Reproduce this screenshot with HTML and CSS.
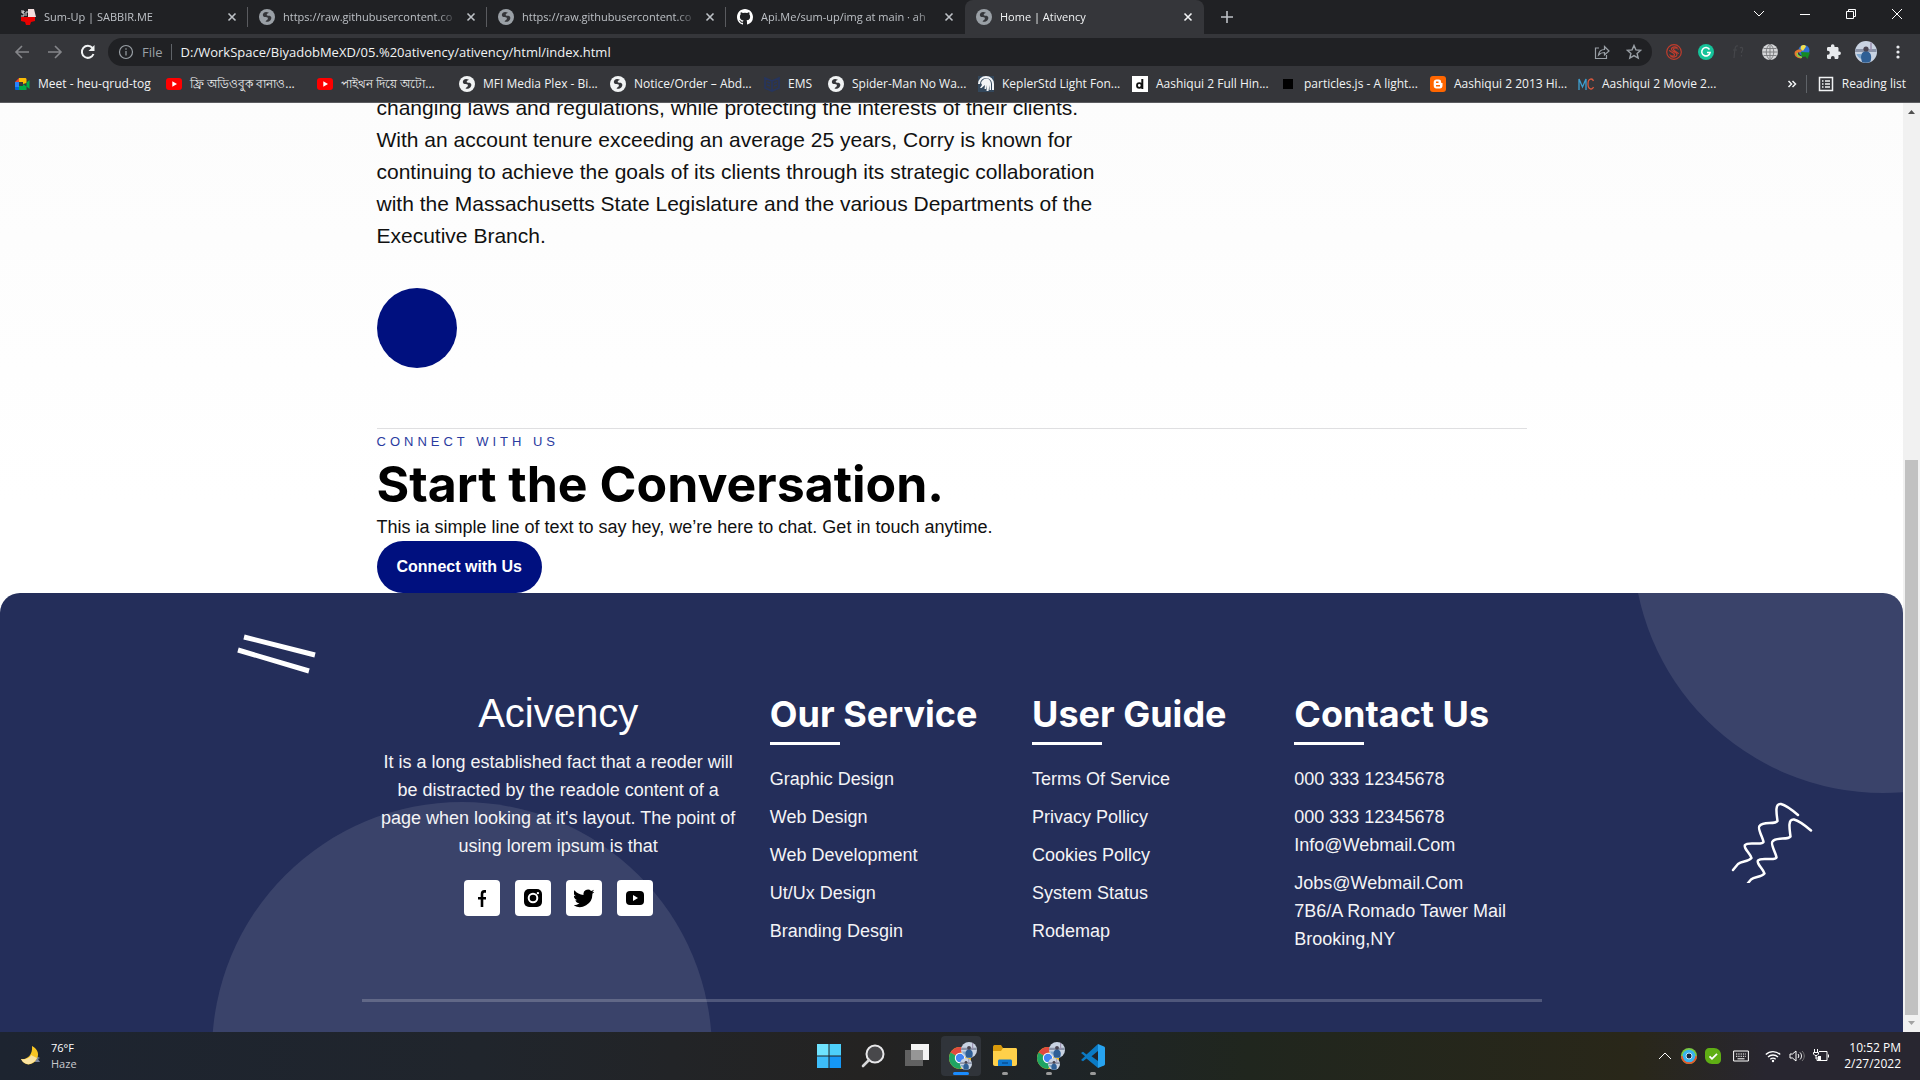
FILE: index.html
```html
<!DOCTYPE html>
<html lang="en">
<head>
<meta charset="utf-8">
<title>Home | Ativency</title>
<link rel="stylesheet" href="styles.css">
</head>
<body>
<svg class="defs" aria-hidden="true">
  <defs>
    <symbol id="globe" viewBox="0 0 16 16"><circle cx="8" cy="8" r="8" fill="currentColor"/><path class="land" d="M8 3.2C6 2.6 4 4 3.8 6c.2 1.800 1.400 2 2.800 2.100 1.800.1 2.600.7 2.200 1.900-.4 1.200-1.800 1.200-2.200 2.700 3.600.8 6-1.700 5.700-4.200-.2-1.600-1.600-1.900-2.800-1.800C7.900 6.800 7.200 5.900 8 5c.6-.6 1.600-.6 1.800-1.200C9.600 3.400 8.700 3.300 8 3.200z"/></symbol>
    <symbol id="close" viewBox="0 0 10 10"><path d="M1.500 1.500l7 7M8.500 1.500l-7 7" stroke="currentColor" stroke-width="1.600" fill="none"/></symbol>
    <symbol id="youtube" viewBox="0 0 16 16"><rect y="2" width="16" height="12" rx="3" fill="#f00"/><path d="M6.300 5.300v5.400L11 8z" fill="#fff"/></symbol>
    <symbol id="photo" viewBox="0 0 22 22"><circle cx="11" cy="11" r="11" fill="#c9d3e2"/><path d="M.5 8h21v3H0z" fill="#8a93a8"/><path d="M1.500 13h5v5c-2.500-1-4-2.500-5-5z" fill="#7fa8cf"/><path d="M7 21c-2-6-1-10 4-11 5 1 6 5 4.500 10.500-3 1.500-6 1.500-8.500.5z" fill="#2f5f95"/><circle cx="11" cy="8" r="2.600" fill="#4a4552"/><path d="M16 1.500v8" stroke="#9a8fae" stroke-width="1.500"/></symbol>
    <symbol id="chrome" viewBox="0 0 28 28"><circle cx="11" cy="16" r="11" fill="#fbc116"/><path d="M11 16 1.500 10.500A11 11 0 0 1 20.500 10.500H11z" fill="#e04a3f"/><path d="M11 16 1.500 10.500A11 11 0 0 0 11 27l4.500-8z" fill="#1fa463"/><circle cx="11" cy="16" r="5.200" fill="#fff"/><circle cx="11" cy="16" r="4.200" fill="#4285f4"/><use href="#photo" x="12" y="0" width="16" height="16"/><use href="#photo" x="11" y="16" width="12" height="12"/></symbol>
  </defs>
</svg>

<header class="browser">
  <nav class="tabs" aria-label="Tabs">
    <div class="tab"><svg class="fav" viewBox="0 0 16 16"><path d="M8 0h6l2 8H8z" fill="#f3dede"/><path d="M1 8h14v4l-4 1-1 3H6l-1-3-4-1z" fill="#e80000"/><path d="M1 2h3v1H2v1h2v3H1M6 7V3h2" stroke="#ddd" fill="none"/></svg><span class="title">Sum-Up | SABBIR.ME</span><button class="x" aria-label="Close tab"><svg><use href="#close"/></svg></button></div>
    <div class="tab"><svg class="fav dim"><use href="#globe"/></svg><span class="title">https://raw.githubusercontent.co</span><button class="x" aria-label="Close tab"><svg><use href="#close"/></svg></button></div>
    <div class="tab"><svg class="fav dim"><use href="#globe"/></svg><span class="title">https://raw.githubusercontent.co</span><button class="x" aria-label="Close tab"><svg><use href="#close"/></svg></button></div>
    <div class="tab last"><svg class="fav" viewBox="0 0 16 16"><path fill="#fff" d="M8 0C3.580 0 0 3.580 0 8c0 3.540 2.290 6.530 5.470 7.590.4.070.55-.17.55-.38v-1.490c-2.230.48-2.690-1.070-2.690-1.070-.36-.92-.89-1.170-.89-1.170-.73-.5.050-.49.050-.49.8.060 1.230.83 1.230.83.71 1.230 1.870.87 2.330.66.070-.52.280-.87.510-1.070-1.780-.2-3.640-.89-3.640-3.950 0-.87.310-1.590.82-2.150-.08-.2-.36-1.020.080-2.120 0 0 .67-.21 2.200.82a7.400 7.400 0 0 1 4 0c1.530-1.040 2.200-.82 2.200-.82.44 1.100.16 1.920.080 2.120.51.560.82 1.270.82 2.150 0 3.070-1.870 3.750-3.650 3.950.29.250.54.730.54 1.480v2.200c0 .21.150.46.550.38A8 8 0 0 0 16 8c0-4.420-3.580-8-8-8z"/></svg><span class="title">Api.Me/sum-up/img at main · ah</span><button class="x" aria-label="Close tab"><svg><use href="#close"/></svg></button></div>
    <div class="tab active"><svg class="fav dim"><use href="#globe"/></svg><span class="title">Home | Ativency</span><button class="x" aria-label="Close tab"><svg><use href="#close"/></svg></button></div>
    <button class="newtab" aria-label="New tab"><svg viewBox="0 0 12 12"><path d="M6 0v12M0 6h12" stroke="currentColor" stroke-width="1.600"/></svg></button>
    <div class="window-buttons">
      <button aria-label="Search tabs"><svg viewBox="0 0 12 12"><path d="M1 3l5 5 5-5"/></svg></button>
      <button aria-label="Minimise"><svg viewBox="0 0 12 12"><path d="M1 6.500h10"/></svg></button>
      <button aria-label="Restore"><svg viewBox="0 0 12 12"><path d="M1.500 3.500h7v7h-7zM3.500 3.500v-2h7v7h-2"/></svg></button>
      <button aria-label="Close window"><svg viewBox="0 0 12 12"><path d="M1 1l10 10M11 1L1 11"/></svg></button>
    </div>
  </nav>

  <div class="toolbar">
    <button class="tool faded" aria-label="Back"><svg viewBox="0 0 16 16"><path d="M15 8H2M8 2L2 8l6 6"/></svg></button>
    <button class="tool faded" aria-label="Forward"><svg viewBox="0 0 16 16"><path d="M1 8h13M8 2l6 6-6 6"/></svg></button>
    <button class="tool" aria-label="Reload"><svg viewBox="0 0 16 16"><path stroke-width="2" d="M13.500 10A6 6 0 1 1 12.500 4"/><path d="M14.500 1v6H8.500z" fill="currentColor" stroke="none"/></svg></button>
    <div class="omnibox">
      <svg class="glyph info" viewBox="0 0 16 16"><circle cx="8" cy="8" r="6.500"/><path d="M8 7v4.500M8 4.300v1.500"/></svg>
      <label class="scheme" for="url">File</label>
      <input id="url" type="text" value="D:/WorkSpace/BiyadobMeXD/05.%20ativency/ativency/html/index.html">
      <button aria-label="Share"><svg class="glyph" viewBox="0 0 16 16"><path d="M5 4H1.500v10.500h11V11M4.500 11c.5-4 2.500-5.500 6-5.500V2.500L15 7l-4.500 4V8.500c-3 0-4.500.8-6 2.500z"/></svg></button>
      <button aria-label="Bookmark this page"><svg class="glyph" viewBox="0 0 16 16"><path stroke-width="1.400" d="M8 1.500l1.900 4.400 4.800.4-3.600 3.100 1.100 4.700L8 11.600l-4.200 2.500 1.100-4.700-3.600-3.100 4.800-.4z"/></svg></button>
    </div>
    <div class="extensions">
      <svg viewBox="0 0 16 16"><g fill="none" stroke="#c13c2c" stroke-width="1.200"><circle cx="8" cy="8" r="7.300"/><path d="M11.500 4C9 2 5 3 5.500 5.500S11 8 11 10.500 7 14 4.500 12M12.500 5.500C11 3.500 7 3.500 7.500 5.500S12.500 8 12.500 10M3.500 10.500C5 12.500 9 12.500 8.500 10.500S3.500 8 3.500 6"/></g></svg>
      <svg viewBox="0 0 16 16"><circle cx="8" cy="8" r="8" fill="#15c39a"/><path d="M11.500 5.500a4.200 4.200 0 1 0 .6 3H9" fill="none" stroke="#fff" stroke-width="1.500"/></svg>
      <svg viewBox="0 0 16 16"><path d="M8 2C5 1 5 4 4 14M3 6h4M10 4c2-2 4 1 1.500 4v1M11.500 11v1.500" fill="none" stroke="#45464a" stroke-width="1.200"/></svg>
      <svg viewBox="0 0 16 16"><circle cx="8" cy="8" r="8" fill="#d5d6d8"/><path d="M0 8h16M8 0v16M1.500 4.500h13M1.500 11.500h13M8 0C3 4 3 12 8 16M8 0c5 4 5 12 0 16" fill="none" stroke="#77787c" stroke-width=".9"/></svg>
      <svg viewBox="0 0 16 16"><circle cx="10" cy="6.500" r="5.500" fill="#2f6fd0"/><path d="M7 2c2-1.500 4.500-1 5 .5L9 7 6.500 5z" fill="#f4e04f"/><path d="M1 7.500C3 5 6 5 8 6l-1 2-3 .5L4 11l4 2-1 1.500C2 14-.5 11 1 7.500z" fill="#e6762e"/><path d="M3 9l1 3 4 1.500" stroke="#7fd44a" stroke-width="1.500" fill="none"/><path d="M7 8l9 .5-2.500 6.500-2-2.500-3.500.5z" fill="#168a22"/></svg>
      <svg viewBox="0 0 16 16"><path d="M13.500 7.500h-1V4.300c0-.7-.6-1.300-1.300-1.300H8.500V2a1.800 1.800 0 0 0-3.600 0v1H2.300C1.600 3 1 3.600 1 4.300v2.500h.8a2 2 0 0 1 0 4H1v2.700c0 .8.600 1.500 1.300 1.500h2.600v-1a1.900 1.900 0 0 1 3.800 0v1h2.500c.7 0 1.300-.7 1.300-1.500V11h1a1.800 1.800 0 0 0 0-3.500z" fill="#e8eaed"/></svg>
      <svg class="avatar"><use href="#photo"/></svg>
      <svg viewBox="0 0 16 16"><g fill="#e8eaed"><circle cx="8" cy="3" r="1.600"/><circle cx="8" cy="8" r="1.600"/><circle cx="8" cy="13" r="1.600"/></g></svg>
    </div>
  </div>

  <nav class="bookmarks" aria-label="Bookmarks">
    <a href="#"><svg viewBox="0 0 16 16"><path d="M1 6l4-4v4z" fill="#ea4335"/><path d="M5 2h6c1 0 1.500.5 1.500 1.500V7L9 8V6H5z" fill="#fbbc04"/><path d="M1 6h4v5H1z" fill="#2684fc"/><path d="M1 11h4v3H2c-.6 0-1-.5-1-1z" fill="#0066da"/><path d="M5 10h4V8l3.500 2.500V14H5zM12.500 6.500L15.500 4v9l-3-2.500z" fill="#00ac47"/></svg>Meet - heu-qrud-tog</a>
    <a href="#"><svg><use href="#youtube"/></svg>ফ্রি অডিওবুক বানাও...</a>
    <a href="#"><svg><use href="#youtube"/></svg>পাইথন দিয়ে অটো...</a>
    <a href="#"><svg><use href="#globe"/></svg>MFI Media Plex - Bi...</a>
    <a href="#"><svg><use href="#globe"/></svg>Notice/Order – Abd...</a>
    <a href="#"><svg viewBox="0 0 16 16"><path d="M1 2l7 3v10l-7-3zM15 2L8 5v10l7-3zM3 6l3 1M3 9l3 1M10 7l3-1M10 10l3-1" fill="none" stroke="#26355e" stroke-width="1.600"/></svg>EMS</a>
    <a href="#"><svg><use href="#globe"/></svg>Spider-Man No Wa...</a>
    <a href="#"><svg viewBox="0 0 16 16"><path d="M0 0h16v16H0z" fill="#33475b"/><path d="M1 8c0-4 3-7 7-7s7 3 7 7v6" fill="none" stroke="#f2f4f6" stroke-width="2"/><path d="M3 7c1-3 3-4.500 5.500-4.500S13 5 13 8v6h-1.500V9L10.500 15H8.500L9 9l-1 4H6.500L7 9l-3.500 3H2l2-3z" fill="#f2f4f6"/></svg>KeplerStd Light Fon...</a>
    <a href="#"><svg viewBox="0 0 16 16"><path d="M0 0h16v16H0z" fill="#fff"/><circle cx="7.300" cy="9.500" r="2.300" fill="none" stroke="#111" stroke-width="1.800"/><path d="M10.300 3v10" stroke="#111" stroke-width="2"/></svg>Aashiqui 2 Full Hin...</a>
    <a href="#"><svg viewBox="0 0 16 16"><path d="M3 3h10v10H3z" fill="#000"/></svg>particles.js - A light...</a>
    <a href="#"><svg viewBox="0 0 16 16"><rect width="16" height="16" rx="3" fill="#f60"/><path d="M6.500 3.500h2.200c1.500 0 2.300.9 2.300 2.200 0 1 .3 1.300 1.500 1.300v2.800c0 1.600-1 2.700-2.600 2.700H6.300c-1.600 0-2.600-1.100-2.600-2.700V6.200c0-1.600 1.200-2.700 2.800-2.700z" fill="#fff"/><path d="M6 6.300h2.500M6 9.800h4" stroke="#f60" stroke-width="1.400"/></svg>Aashiqui 2 2013 Hi...</a>
    <a href="#"><svg viewBox="0 0 16 16"><path d="M1 14V3l3.500 8L8 3v11" fill="none" stroke="#3f9fd0" stroke-width="1.300"/><path d="M15.500 5c-1-3-5.500-3-5.500 3s4.500 6 5.500 3" fill="none" stroke="#d8583d" stroke-width="1.300"/></svg>Aashiqui 2 Movie 2...</a>
    <button class="more" aria-label="More bookmarks"><svg viewBox="0 0 10 10"><path d="M1.500 2l3 3-3 3M5.500 2l3 3-3 3" fill="none" stroke="currentColor" stroke-width="1.500"/></svg></button>
    <a class="reading" href="#"><svg viewBox="0 0 16 16"><path d="M1.500 1.500h13v13h-13zM4 5h1.500M7 5h5M4 8h1.500M7 8h5M4 11h1.500M7 11h5" fill="none" stroke="currentColor" stroke-width="1.500"/></svg>Reading list</a>
  </nav>
</header>

<div class="viewport">
  <div class="page">
    <main class="container">
      <p class="bio">changing laws and regulations, while protecting the interests of their clients. With an account tenure exceeding an average 25 years, Corry is known for continuing to achieve the goals of its clients through its strategic collaboration with the Massachusetts State Legislature and the various Departments of the Executive Branch.</p>
      <div class="dot"></div>
      <section class="connect">
        <p class="eyebrow">CONNECT WITH US</p>
        <h2>Start the Conversation.</h2>
        <p class="lead">This ia simple line of text to say hey, we’re here to chat. Get in touch anytime.</p>
        <button class="cta">Connect with Us</button>
      </section>
    </main>

    <footer class="footer">
      <div class="bubble bubble-left"></div>
      <div class="bubble bubble-right"></div>
      <svg class="dashes" viewBox="0 0 80 42"><path d="M7 5l71 18M1 18l71 21" stroke="#fff" stroke-width="5"/></svg>
      <svg class="squiggle" viewBox="0 0 82 82"><g fill="none" stroke="#fff" stroke-width="2.500" stroke-linecap="round" stroke-linejoin="round"><path id="wave" d="M67 14C60 8 54 4 50 3C43 2 46 15 46.500 20C44 24 32 20 28.500 25C26 27 32 37 32.500 41C31 45 17 40 14 44C12 47 19 52 20.500 57C17 61 11 60 7 63L2 69"/><use href="#wave" x="13" y="15.500"/></g></svg>
      <div class="columns">
        <div class="about">
          <h3>Acivency</h3>
          <p>It is a long established fact that a reoder will be distracted by the readole content of a page when looking at it's layout. The point of using lorem ipsum is that</p>
          <div class="social">
            <a href="#" aria-label="Facebook"><svg viewBox="0 0 20 20"><path d="M11.300 19v-7.500H14V9h-2.700V6.200c0-.9.300-1.500 1.500-1.500H14V2.100C13.700 2.100 13 2 12.300 2 10 2 8.700 3.400 8.700 5.900V9H6v2.500h2.700V19z"/></svg></a>
            <a href="#" aria-label="Instagram"><svg viewBox="0 0 20 20"><rect x="1" y="1" width="18" height="18" rx="5"/><circle cx="10" cy="10" r="4.300" fill="none" stroke="#fff" stroke-width="2"/><circle cx="14.900" cy="5.100" r="1.200" fill="#fff"/></svg></a>
            <a href="#" aria-label="Twitter"><svg viewBox="1 2 22 20"><path d="M23.600 4.900a9.600 9.600 0 0 1-2.800.8 4.900 4.900 0 0 0 2.100-2.700 9.700 9.700 0 0 1-3.100 1.200 4.900 4.900 0 0 0-8.300 4.400A13.800 13.800 0 0 1 1.500 3.500a4.900 4.900 0 0 0 1.500 6.500 4.800 4.800 0 0 1-2.200-.6c0 2.300 1.600 4.400 3.900 4.900a4.900 4.900 0 0 1-2.200.1 4.900 4.900 0 0 0 4.500 3.400A9.800 9.800 0 0 1 0 19.800 13.900 13.900 0 0 0 21.200 7.400c.9-.7 1.700-1.500 2.400-2.500z"/></svg></a>
            <a href="#" aria-label="YouTube"><svg viewBox="0 0 20 20"><rect x="1" y="3" width="18" height="14" rx="4"/><path d="M8 7v6l5-3z" fill="#fff"/></svg></a>
          </div>
        </div>
        <div class="links">
          <h3>Our Service</h3>
          <ul>
            <li><a href="#">Graphic Design</a></li>
            <li><a href="#">Web Design</a></li>
            <li><a href="#">Web Development</a></li>
            <li><a href="#">Ut/Ux Design</a></li>
            <li><a href="#">Branding Desgin</a></li>
          </ul>
        </div>
        <div class="links">
          <h3>User Guide</h3>
          <ul>
            <li><a href="#">Terms Of Service</a></li>
            <li><a href="#">Privacy Pollicy</a></li>
            <li><a href="#">Cookies Pollcy</a></li>
            <li><a href="#">System Status</a></li>
            <li><a href="#">Rodemap</a></li>
          </ul>
        </div>
        <div class="links">
          <h3>Contact Us</h3>
          <ul>
            <li><a href="#">000 333 12345678</a></li>
            <li><a href="#">000 333 12345678</a><br><a href="#">Info@Webmail.Com</a></li>
            <li><a href="#">Jobs@Webmail.Com</a><br>7B6/A Romado Tawer Mail Brooking,NY</li>
          </ul>
        </div>
      </div>
      <hr class="rule">
    </footer>
  </div>
  <div class="scrollbar">
    <svg viewBox="0 0 7 4"><path d="M0 4L3.500 0 7 4z" fill="#505050"/></svg>
    <div class="track"><div class="thumb"></div></div>
    <svg viewBox="0 0 7 4"><path d="M0 0h7L3.500 4z" fill="#a3a3a3"/></svg>
  </div>
</div>

<div class="taskbar">
  <div class="weather">
    <svg viewBox="0 0 22 22"><path d="M9 17h12l-2-3 2-1-4-2z" fill="#77839c"/><path d="M13 1c6 3 8 9 4 14-4 6-12 6-15-1 5 1 12-3 11-13z" fill="#f9c623"/><path d="M2 14c4 1 9-1 10-4l6 3c-4 8-13 8-16 1z" fill="#fbe3a0"/></svg>
    <div>76°F<br><span>Haze</span></div>
  </div>
  <div class="apps">
    <button aria-label="Start"><svg viewBox="0 0 24 24"><path d="M0 0h11.500v11.500H0z" fill="#6fe3ff"/><path d="M12.500 0H24v11.500H12.500z" fill="#4dd0fb"/><path d="M0 12.500h11.500V24H0z" fill="#3dbdfa"/><path d="M12.500 12.500H24V24H12.500z" fill="#1597f5"/></svg></button>
    <button aria-label="Search"><svg viewBox="0 0 24 24"><circle cx="14" cy="10" r="8.500" fill="#48484b" stroke="#e8e8ea" stroke-width="2"/><path d="M8 16l-6 6" stroke="#d6d6d8" stroke-width="2.600" stroke-linecap="round"/></svg></button>
    <button aria-label="Task view"><svg viewBox="0 0 24 24"><path d="M6 0h18v16H6z" fill="#f4f4f4"/><path d="M0 6h18v16H0z" fill="#777" opacity=".75"/></svg></button>
    <button class="current" aria-label="Chrome"><svg class="big"><use href="#chrome"/></svg></button>
    <button class="running" aria-label="File Explorer"><svg viewBox="0 0 24 24"><path d="M0 3c0-1 .5-2 1.500-2H8l2 3v4H0z" fill="#d99a0b"/><path d="M0 7h8l2-3h12.500c1 0 1.500.6 1.500 1.500V20c0 1.200-.8 2-2 2H2c-1.200 0-2-.8-2-2z" fill="#ffd04a"/><path d="M5 22v-5c0-1 .6-1.600 1.600-1.600h10.800c1 0 1.600.6 1.600 1.600v5z" fill="#0f78d0"/><path d="M9 19h6" stroke="#0a4f94" stroke-width="1.500"/></svg></button>
    <button class="running" aria-label="Chrome, second profile"><svg class="big"><use href="#chrome"/></svg></button>
    <button class="running" aria-label="Visual Studio Code"><svg viewBox="0 0 24 24"><path d="M17 0L5.500 10.500 2 7.800 0 9l4 3.300L0 16l2 1.200 3.500-2.700L17 24z" fill="#0b7ac4"/><path d="M17 7v10l-6.500-4.800z" fill="#20242a"/><path d="M17 0l6 2.600c.6.300 1 .8 1 1.500v16c0 .7-.4 1.200-1 1.500L17 24z" fill="#27a3f0"/></svg></button>
  </div>
  <div class="tray">
    <svg viewBox="0 0 16 16"><path d="M2 11l6-6 6 6"/></svg>
    <svg viewBox="0 0 16 16"><circle cx="8" cy="8" r="8" fill="#7bc943" stroke="none"/><path d="M0 8a8 8 0 0 0 16 0z" fill="#e8562a" stroke="none"/><circle cx="8" cy="8" r="6.300" fill="#39b4f0" stroke="none"/><circle cx="8" cy="8" r="3" fill="#182638" stroke="#bfe6fb"/></svg>
    <svg viewBox="0 0 16 16"><path d="M4 0h5c4 0 7 3 7 7v5c0 2-2 4-4 4H7c-4 0-7-3-7-7V4c0-2 2-4 4-4z" fill="#5fae14" stroke="none"/><path d="M4.500 8.300l2.500 2.500 5-5" stroke-width="1.800"/></svg>
    <svg class="keyboard" viewBox="0 0 16 16"><path d="M.6 3h14.800v10H.6z"/><path d="M3 6h10M3 8.300h10" stroke-dasharray="1.300 1"/><path d="M4.500 10.800h7"/></svg>
    <svg class="wifi" viewBox="0 0 16 16"><path d="M.8 6.500a10.300 10.300 0 0 1 14.400 0M3 9a7.200 7.200 0 0 1 10 0M5.300 11.300a4 4 0 0 1 5.400 0" stroke-width="1.300"/><circle cx="8" cy="13" r="1.200" fill="#fff" stroke="none"/></svg>
    <svg viewBox="0 0 16 16"><path d="M1 6h2.500L7 3v10l-3.500-3H1zM9 6c1 1 1 3 0 4M11 4.500c2 2 2 5 0 7"/><path d="M13 3c3 3 3 7 0 10" stroke="#777"/></svg>
    <svg viewBox="0 0 16 16"><path d="M6 3.500h8v9H4V9M15.500 6.500v3M1.500 1v3M4.500 1v3M.5 4.500h5V6L4 7.500H2L.5 6zM3 7v4"/><path d="M5 8h3v4H5z" fill="#fff" stroke="none"/></svg>
    <div class="clock">10:52 PM<br>2/27/2022</div>
  </div>
</div>
</body>
</html>
```
FILE: styles.css
```css
* { box-sizing: border-box; }

body {
  margin: 0;
  height: 100vh;
  display: flex;
  flex-direction: column;
  overflow: hidden;
  font-family: "Liberation Sans", Arial, sans-serif;
  color: #111;
}

button { border: 0; padding: 0; background: none; color: inherit; font: inherit; }
a { color: inherit; text-decoration: none; }
svg { display: block; flex: none; }
.defs { position: absolute; width: 0; height: 0; }

/* Browser frame */
.browser {
  flex: none;
  background: #35363a;
  border-bottom: 1px solid #5b5c60;
  color: #f1f3f4;
  font: 12px/16px "Open Sans", "Noto Sans", sans-serif;
}

.tabs {
  display: flex;
  height: 34px;
  padding-left: 9px;
  background: #202124;
  color: #bdc1c6;
  font-size: 11px;
}
.tab {
  display: flex;
  flex: 0 1 239px;
  align-items: center;
  gap: 8px;
  padding: 0 11px;
  min-width: 0;
  background: linear-gradient(#5a5b5f, #5a5b5f) right center / 1px 20px no-repeat;
}
.tab.last { background: none; }
.tab.active { background: #35363a; border-radius: 8px 8px 0 0; color: #f1f3f4; }
.fav { width: 16px; height: 16px; }
.land { fill: #35363a; }
.dim { color: #9aa0a6; }
.title {
  flex: 1;
  min-width: 0;
  overflow: hidden;
  white-space: nowrap;
  -webkit-mask-image: linear-gradient(90deg, #000 88%, transparent);
  mask-image: linear-gradient(90deg, #000 88%, transparent);
}
.x svg { width: 10px; height: 10px; }
.newtab { width: 46px; display: grid; place-items: center; }
.newtab svg { width: 12px; height: 12px; }
.window-buttons { display: flex; margin-left: auto; }
.window-buttons button { width: 46px; height: 28px; display: grid; place-items: center; }
.window-buttons svg { width: 12px; height: 12px; fill: none; stroke: #fff; }

.toolbar { display: flex; align-items: center; height: 36px; padding: 0 14px 0 5px; font-size: 13px; }
.tool { width: 33px; display: grid; place-items: center; }
.tool svg { width: 16px; height: 16px; fill: none; stroke: currentColor; stroke-width: 1.6; }
.faded { color: #85868a; }
.omnibox {
  flex: 1;
  display: flex;
  align-items: center;
  height: 28px;
  margin-left: 4px;
  padding: 0 10px;
  border-radius: 14px;
  background: #202124;
  color: #9aa0a6;
}
.glyph { width: 16px; height: 16px; fill: none; stroke: #9aa0a6; stroke-width: 1.2; }
.omnibox button { margin-left: 16px; }
.scheme { margin-left: 8px; padding-right: 8px; border-right: 1px solid #5f6368; }
.omnibox input {
  flex: 1;
  min-width: 0;
  padding: 0 0 0 9px;
  border: 0;
  outline: 0;
  background: none;
  color: #f1f3f4;
  font: inherit;
}
.extensions { display: flex; align-items: center; gap: 16px; padding-left: 14px; }
.extensions svg { width: 16px; height: 16px; }
.extensions .avatar { width: 22px; height: 22px; margin: 0 -3px; }

.bookmarks {
  display: grid;
  grid-template-columns: 152px 151px 142px 151px 154px 64px 150px 154px 148px 150px 148px 1fr auto auto;
  align-items: center;
  height: 32px;
  padding: 0 14px 4px;
}
.bookmarks a { display: flex; align-items: center; gap: 8px; white-space: nowrap; }
.bookmarks a svg { width: 16px; height: 16px; }
.more { padding-right: 9px; border-right: 1px solid #5f6368; height: 18px; }
.more svg { width: 10px; height: 10px; }
.bookmarks .reading { padding-left: 11px; }

/* Page area */
.viewport { flex: 1; min-height: 0; display: flex; background: linear-gradient(#fcfcfc, #fff 400px); }
.page { flex: 1; min-width: 0; display: flex; flex-direction: column; overflow: hidden; }
.container { width: 100%; max-width: 1180px; margin: 0 auto; padding: 0 15px; }

.bio { max-width: 736px; margin: -11px 0 36px; font-size: 21px; line-height: 32px; }
.dot { width: 80px; height: 80px; border-radius: 50%; background: #00107f; }
.connect { margin-top: 60px; border-top: 1px solid #dfdfe1; }
.eyebrow { margin: 0; color: #2a3ba0; font-size: 13px; line-height: 26px; letter-spacing: 4px; }
.connect h2 {
  margin: 0;
  color: #000;
  font: 700 50px/58px Inter, sans-serif;
}
.lead { margin: 0; font-size: 18px; line-height: 28px; }
.cta {
  display: block;
  height: 52px;
  padding: 0 20px;
  border-radius: 26px;
  background: #00107f;
  color: #fff;
  font-size: 16px;
  font-weight: 700;
}

.footer {
  position: relative;
  flex: 1;
  padding-top: 96px;
  overflow: hidden;
  border-radius: 20px 20px 0 0;
  background: #242e5a;
  color: #f4f4f6;
  font-size: 18px;
  line-height: 28px;
}
.bubble { position: absolute; width: 500px; height: 500px; border-radius: 50%; background: rgba(255, 255, 255, .1); }
.bubble-left { left: 212px; top: 209px; }
.bubble-right { right: -230px; top: -300px; }
.dashes { position: absolute; left: 237px; top: 39px; width: 80px; height: 42px; }
.squiggle { position: absolute; right: 90px; top: 208px; width: 82px; height: 82px; }

.columns {
  position: relative;
  display: grid;
  grid-template-columns: 3fr 2fr 2fr 2fr;
  max-width: 1180px;
  margin: 0 auto;
}
.columns > div { padding: 0 15px; }
.columns h3 { margin: 0; color: #fff; white-space: nowrap; }
.about { text-align: center; }
.about h3 { font-size: 40px; line-height: 48px; font-weight: 400; }
.about p { margin: 11px 0 20px; }
.social { display: flex; justify-content: center; gap: 15px; }
.social a { display: grid; place-items: center; width: 36px; height: 36px; border-radius: 4px; background: #fff; }
.social svg { width: 20px; height: 20px; fill: #000; }
.links h3 { font: 700 36px/50px Inter, sans-serif; }
.links h3::after { content: ""; display: block; width: 70px; height: 3px; margin-top: 3px; background: #fff; }
.links ul { margin: 20px 0 0; padding: 0; list-style: none; }
.links li { margin-bottom: 10px; }
.rule { position: relative; max-width: 1180px; height: 3px; margin: 36px auto 0; border: 0; background: rgba(255, 255, 255, .2); }

.scrollbar {
  flex: none;
  display: flex;
  flex-direction: column;
  align-items: center;
  width: 17px;
  padding: 7px 2px;
  background: #f1f1f1;
}
.scrollbar svg { width: 7px; height: 4px; }
.track { flex: 1; display: flex; align-items: flex-end; width: 100%; padding: 6px 0; }
.thumb { width: 100%; height: 62%; background: #c1c1c1; }

/* Taskbar */
.taskbar {
  flex: none;
  display: grid;
  grid-template-columns: 1fr auto 1fr;
  align-items: center;
  height: 48px;
  padding: 0 19px;
  background: linear-gradient(90deg, #1d2430, #20252c 25%, #242322 45%, #1e2428 55%, #20261e 65%, #292719 85%, #282630 92%);
  color: #fff;
  font: 12px/16px "Open Sans", "Noto Sans", sans-serif;
}
.weather { display: flex; align-items: center; gap: 10px; font-size: 11px; }
.weather svg { width: 22px; height: 22px; }
.weather span { color: #c8cace; }
.apps { display: flex; gap: 4px; padding-left: 2px; }
.apps button {
  position: relative;
  display: grid;
  place-items: center;
  width: 40px;
  height: 40px;
  border-radius: 4px;
}
.apps svg { width: 24px; height: 24px; }
.apps .big { width: 28px; height: 28px; margin-left: 4px; }
.apps .current { background: #30343a; }
.apps .current::after, .apps .running::after {
  content: "";
  position: absolute;
  bottom: 1px;
  left: 17px;
  width: 6px;
  height: 3px;
  border-radius: 2px;
  background: #9a9a9a;
}
.apps .current::after { left: 12px; width: 16px; background: #1a8cff; }
.tray { display: flex; justify-content: flex-end; align-items: center; gap: 8px; }
.tray svg { width: 16px; height: 16px; fill: none; stroke: #fff; }
.tray .keyboard { margin: 0 8px 0 4px; }
.clock { min-width: 64px; text-align: right; }
```
